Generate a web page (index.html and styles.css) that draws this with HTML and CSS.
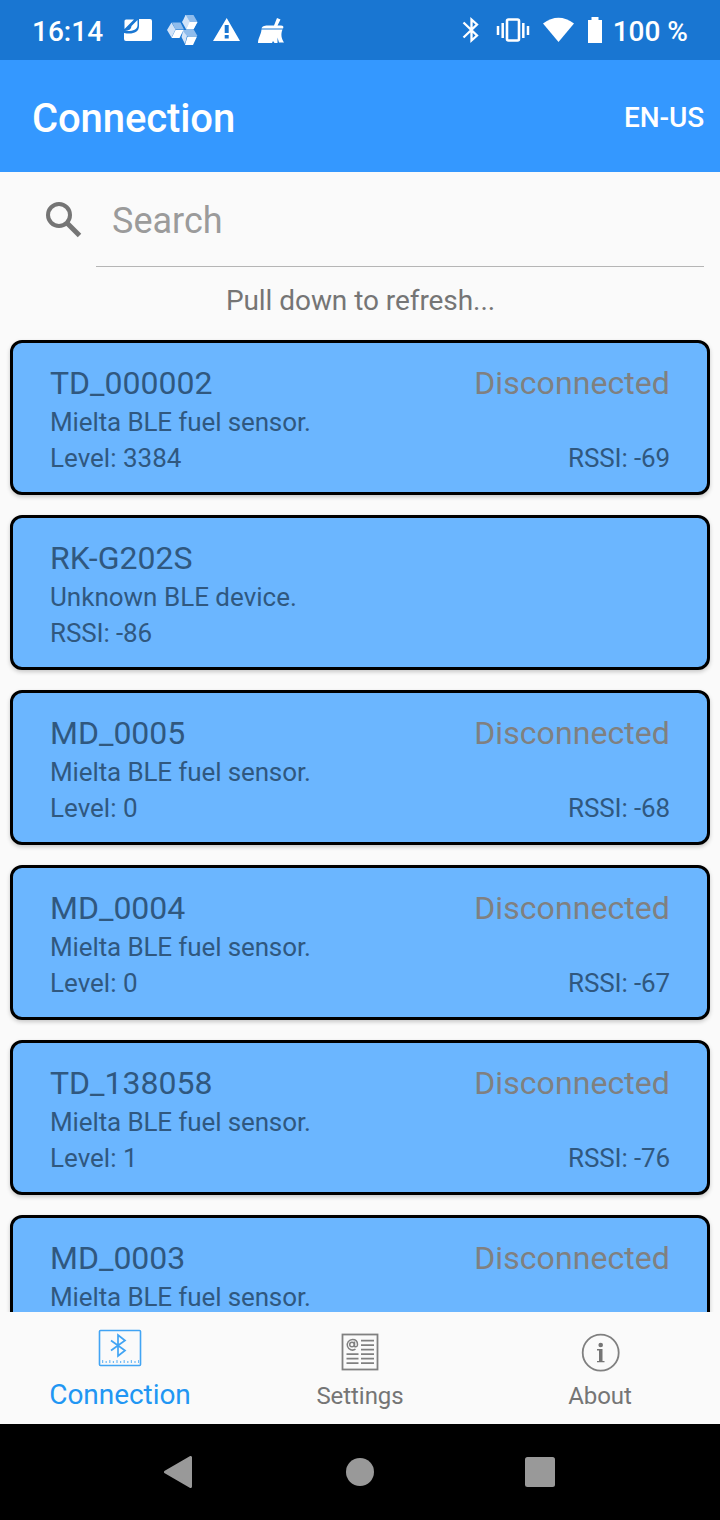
FILE: index.html
```html
<!DOCTYPE html>
<html lang="en">
<head>
<meta charset="utf-8">
<title>Connection</title>
<link rel="stylesheet" href="styles.css">
</head>
<body>
<div class="status">
  <span class="clock">16:14</span>
  <div class="icons">
    <svg width="28" height="60" viewBox="125 0 28 60"><path fill="#fff" d="M140 19h11a2 2 0 0 1 2 2v18a2 2 0 0 1-2 2h-24a2 2 0 0 1-2-2v-6c8 1.500 15 0 15-7zM127 19.500h8L125.500 29v-8a1.500 1.500 0 0 1 1.500-1.500zM138.500 20v5.500c-.5 4.500-5 6-12.500 5.500 4-.5 6-1.500 6.500-5z"/></svg>
    <svg width="31" height="60" viewBox="168 0 31 60"><path fill="#8fbcec" d="M187 15h7.500l4 7-4 7h-8l4-7zM183 30h12l3.500 6H187zM173 22.500h8.500l3.500 7h-8.500z"/><path fill="#d1e3f8" d="M186.500 15l4 7h-4.500l-3 .5zM183 22l4-7 4 7-4 7zM168 30l4.500-7.500 4 7-4 8zM182.500 37l1.500-6 4 5-2 8z"/><path fill="#fff" d="M190.500 22h8l-4 7.500H187zM176.500 30h8l-4 8h-8zM188.500 36.500h9.500l-4 8.500h-8z"/></svg>
    <svg width="28" height="60" viewBox="213 0 28 60"><path fill="#fff" fill-rule="evenodd" d="M226.700 18L240 41h-27zM224.700 25v8h4v-8zM224.700 35v3.500h4V35z"/></svg>
    <svg width="27" height="60" viewBox="258 0 27 60"><path fill="#fff" d="M277 18l3.500 1.500-3 6H281c2 0 3 1 2 3h-21.500c1-3 4-3 7-3h5.500zM261.500 29.500h21c-2 5-1 9 1.500 13h-5l-1.500-5v5.500h-3l-1.500-2-1 2h-14c0-5 3-8 3.500-13.500z"/></svg>
  </div>
  <div class="system">
    <svg width="18" height="60" viewBox="462 0 18 60"><path fill="none" stroke="#fff" stroke-width="2.300" d="M463.500 22.500l13.500 13-5.500 5V19.500l5.500 5-13.500 13"/></svg>
    <svg width="34" height="60" viewBox="496 0 34 60"><g fill="none" stroke="#fff"><rect x="507" y="19.500" width="12" height="21" rx="1.500" stroke-width="2.600"/><path stroke-width="2.500" d="M502.700 23v15M523.300 23v15M498 26v9M528 26v9"/></g></svg>
    <svg width="32" height="60" viewBox="543 0 32 60"><path fill="#fff" d="M543 23.500Q558.500 12 574 23.500L558.500 42z"/></svg>
    <svg width="14" height="60" viewBox="588 0 14 60"><path fill="#fff" d="M591.500 17h7v3h3.500v23h-14V20h3.500z"/></svg>
    <span class="percent">100 %</span>
  </div>
</div>
<header class="appbar"><h1>Connection</h1><span class="lang">EN-US</span></header>
<main class="content">
  <div class="search">
    <svg width="36" height="36" viewBox="0 0 36 36"><g fill="none" stroke="#757575"><circle cx="13" cy="13" r="11" stroke-width="4"/><path d="M21 21l12.500 12.500" stroke-width="5"/></g></svg>
    <div class="field">Search</div>
  </div>
  <p class="hint">Pull down to refresh...</p>
  <div class="list">
    <article class="card"><div class="row title"><span>TD_000002</span><span class="state">Disconnected</span></div><div class="row sensor">Mielta BLE fuel sensor.</div><div class="row"><span>Level: 3384</span><span class="rssi">RSSI: -69</span></div></article>
    <article class="card"><div class="row title"><span>RK-G202S</span></div><div class="row">Unknown BLE device.</div><div class="row"><span class="rssi">RSSI: -86</span></div></article>
    <article class="card"><div class="row title"><span>MD_0005</span><span class="state">Disconnected</span></div><div class="row sensor">Mielta BLE fuel sensor.</div><div class="row"><span>Level: 0</span><span class="rssi">RSSI: -68</span></div></article>
    <article class="card"><div class="row title"><span>MD_0004</span><span class="state">Disconnected</span></div><div class="row sensor">Mielta BLE fuel sensor.</div><div class="row"><span>Level: 0</span><span class="rssi">RSSI: -67</span></div></article>
    <article class="card"><div class="row title"><span>TD_138058</span><span class="state">Disconnected</span></div><div class="row sensor">Mielta BLE fuel sensor.</div><div class="row"><span>Level: 1</span><span class="rssi">RSSI: -76</span></div></article>
    <article class="card"><div class="row title"><span>MD_0003</span><span class="state">Disconnected</span></div><div class="row sensor">Mielta BLE fuel sensor.</div></article>
  </div>
</main>
<nav class="tabs">
  <div class="tab active">
    <svg width="44" height="48" viewBox="98 1328 44 48"><g fill="none" stroke="#2196f3" opacity=".85"><rect x="99.500" y="1330.500" width="41" height="35" rx="1" stroke-width="1.600"/><path stroke-width="1.700" d="M111 1340.500l14 10-7 5.500v-21l7 5.500-14 10"/><path stroke-width="2.200" stroke-dasharray="1.200 2.400" opacity=".75" d="M102 1362h37"/><path stroke-width="1" stroke-dasharray="1.200 6" opacity=".7" d="M102 1360.500h37"/></g></svg>
    <span>Connection</span>
  </div>
  <div class="tab">
    <svg width="38" height="48" viewBox="341 1328 38 48"><g fill="none" stroke="#808080"><rect x="342.500" y="1334.500" width="35" height="35" stroke-width="1.800"/><path stroke-width="1.800" d="M361 1340.700h13M361 1345.200h13M361 1349.700h13M361 1354.200h13M361 1358.700h13M361 1363.200h13M346.500 1354.200h12M346.500 1358.700h12M346.500 1363.200h12"/><circle cx="352" cy="1344.500" r="2.300" stroke-width="1.500"/><path stroke-width="1.500" d="M354.500 1341.500v5q3 1 3-2c0-3-2-5-5-5a5.300 5.300 0 1 0 3 9.700"/></g></svg>
    <span>Settings</span>
  </div>
  <div class="tab">
    <svg width="40" height="48" viewBox="580 1328 40 48"><circle cx="600.700" cy="1352.700" r="18" fill="none" stroke="#808080" stroke-width="1.800"/><circle cx="600.700" cy="1345" r="2.300" fill="#757575"/><path fill="#757575" d="M597 1349h5.500v12h2v1.300h-7.500V1361h2v-10.600h-2z"/></svg>
    <span>About</span>
  </div>
</nav>
<footer class="navbar">
  <svg width="28" height="32" viewBox="0 0 28 32"><path fill="#999" stroke="#999" stroke-width="3" stroke-linejoin="round" d="M1.500 16L26.500 1.500v29z"/></svg>
  <svg class="home" width="28" height="28" viewBox="0 0 28 28"><circle cx="14" cy="14" r="14" fill="#999"/></svg>
  <svg width="30" height="30" viewBox="0 0 30 30"><rect width="30" height="30" rx="2.500" fill="#999"/></svg>
</footer>
</body>
</html>
```
FILE: styles.css
```css
* { box-sizing: border-box; }
body { margin: 0; width: 720px; height: 1520px; display: flex; flex-direction: column; overflow: hidden; background: #fafafa; font-family: Roboto, sans-serif; color: #757575; }
svg { display: block; flex: none; }
.status { height: 60px; flex: none; display: flex; align-items: center; background: #1976d2; color: #fff; font-size: 28px; font-weight: 500; line-height: 60px; white-space: nowrap; padding: 0 32px; }
.clock { width: 92px; padding-top: 3px; }
.icons { display: flex; gap: 15px; }
.icons svg:last-child { margin-left: 2px; }
.percent { padding-top: 2px; margin-left: -2px; height: 60px; }
.system { display: flex; margin-left: auto; gap: 13px; }
.system svg:first-child { margin-right: 3px; }
.appbar { height: 112px; flex: none; display: flex; align-items: center; justify-content: space-between; background: #3498ff; color: #fff; padding: 4px 16px 0 32px; }
.appbar h1 { margin: 0; padding-top: 2px; font-size: 40px; font-weight: 500; line-height: 48px; letter-spacing: -.1px; }
.lang { font-size: 28px; font-weight: 500; margin-top: -2px; letter-spacing: -.1px; }
.content { flex: 1; min-height: 0; overflow: hidden; }
.search { height: 95px; display: flex; padding: 0 16px 0 46px; }
.search svg { margin-top: 30px; }
.field { flex: 1; margin-left: 14px; padding-left: 16px; border-bottom: 1px solid #b5b5b5; font-size: 36px; line-height: 99px; color: #9b9b9b; }
.hint { margin: 0; height: 73px; line-height: 68px; text-align: center; font-size: 28px; letter-spacing: -.06px; padding-left: 1px; }
.list { display: flex; flex-direction: column; gap: 20px; padding: 0 10px; }
.card { height: 155px; flex: none; border: 3px solid #000; border-radius: 12px; background: #6bb6ff; padding: 20px 37px; color: #30587f; font-size: 26px; line-height: 36px; box-shadow: 0 2px 4px rgba(0,0,0,.2); }
.row { display: flex; justify-content: space-between; }
.sensor { letter-spacing: -.12px; }
.rssi { letter-spacing: -.13px; }
.title { font-size: 32px; line-height: 41px; }
.title .state { color: #808080; letter-spacing: .08px; }
.tabs { height: 112px; flex: none; display: grid; grid-template-columns: repeat(3, 1fr); padding-top: 16px; font-size: 24px; line-height: 36px; letter-spacing: -.06px; background: #fafafa; }
.tab { display: flex; flex-direction: column; align-items: center; gap: 2px; }
.active { color: #2196f3; font-size: 28px; gap: 1px; }
.navbar { height: 96px; flex: none; background: #000; display: flex; align-items: center; justify-content: space-between; padding: 0 165px 0 164px; }
.home { margin-left: 2px; }
```
